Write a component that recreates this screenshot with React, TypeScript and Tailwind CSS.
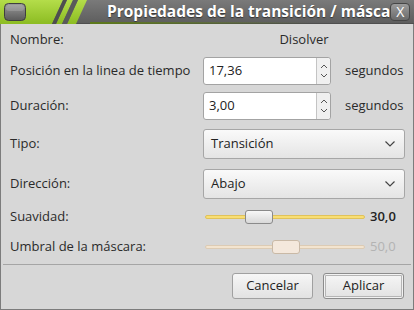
import React from "react";

const font = { fontFamily: '"Open Sans", "Noto Sans", sans-serif' };

function TitleBar() {
  return (
    <div className="relative flex h-[24px] items-center bg-gradient-to-b from-[#7a7a7a] to-[#5e5e5e] border-b border-[#4f4f4f]">
      {/* decoración verde del tema */}
      <svg width="100" height="24" viewBox="0 0 100 24" className="shrink-0">
        <defs>
          <linearGradient id="g" x1="0" y1="0" x2="0" y2="1">
            <stop offset="0" stopColor="#b4dd4a" />
            <stop offset="1" stopColor="#8cbc22" />
          </linearGradient>
          <linearGradient id="b" x1="0" y1="0" x2="0" y2="1">
            <stop offset="0" stopColor="#9a9a9a" />
            <stop offset="1" stopColor="#5a5a5a" />
          </linearGradient>
        </defs>
        <polygon points="0,0 63,0 52,24 0,24" fill="url(#g)" />
        <polygon points="67,0 73,0 62,24 56,24" fill="url(#g)" />
        <polygon points="78,0 87,0 76,24 67,24" fill="url(#g)" />
        <polygon points="63,0 67,0 56,24 52,24" fill="#4e4e4e" />
        <polygon points="73,0 78,0 67,24 62,24" fill="#5a5a5a" />
        <rect x="4.5" y="3.5" width="21" height="17" rx="4" fill="url(#b)" stroke="#3f3f3f" />
        <rect x="6" y="5" width="18" height="6" rx="3" fill="#ffffff" opacity="0.15" />
      </svg>
      <div
        className="ml-[7px] whitespace-nowrap text-[15.5px] font-bold leading-none text-white [text-shadow:0_1px_1px_#333]"
        style={font}
      >
        Propiedades de la transición / másca
      </div>
      <div className="ml-auto mr-[4px] flex h-[18px] w-[21px] items-center justify-center rounded-[4px] border border-[#464646] bg-gradient-to-b from-[#9c9c9c] to-[#6a6a6a] text-[14px] leading-none text-white" style={font}>
        X
      </div>
      <div className="absolute bottom-[-1px] left-[90px] h-[2px] w-[220px] bg-gradient-to-r from-[#5d7a1a] to-transparent" />
    </div>
  );
}

function SpinBox({ value }: { value: string }) {
  return (
    <div className="flex h-[28px] w-[128px] rounded-[3px] border border-[#a3a3a3] bg-white">
      <div className="flex flex-1 items-center pl-[5px] text-[13px] text-[#222]">{value}</div>
      <div className="flex w-[14px] flex-col items-center justify-center border-l border-[#c4c4c4] bg-[#f0f0f0] rounded-r-[3px]">
        <svg width="8" height="20" viewBox="0 0 8 20">
          <path d="M1 7 L4 4 L7 7" fill="none" stroke="#555" strokeWidth="1" />
          <path d="M1 13 L4 16 L7 13" fill="none" stroke="#555" strokeWidth="1" />
        </svg>
      </div>
    </div>
  );
}

function Combo({ value }: { value: string }) {
  return (
    <div className="flex h-[30px] w-[202px] items-center justify-between rounded-[3px] border border-[#a6a6a6] bg-gradient-to-b from-[#fafafa] to-[#e4e4e4] pl-[7px] pr-[9px] text-[13px] text-[#222]">
      <span>{value}</span>
      <svg width="10" height="6" viewBox="0 0 10 6">
        <path d="M0.5 0.5 L5 5 L9.5 0.5" fill="none" stroke="#444" strokeWidth="1.2" />
      </svg>
    </div>
  );
}

function Slider({ pos, disabled, value }: { pos: number; disabled?: boolean; value: string }) {
  return (
    <div className="flex items-center">
      <div className="relative ml-[2px] flex h-[20px] w-[160px] items-center">
        <div
          className={
            disabled
              ? "h-[4px] w-full rounded-full border border-[#dccbb4] bg-[#f3e4cf]"
              : "h-[4px] w-full rounded-full border border-[#e0c25a] bg-[#f8de74]"
          }
        />
        <div
          className={
            disabled
              ? "absolute top-[3px] h-[14px] w-[28px] rounded-[3px] border border-[#c9b9a6] bg-[#f4e8dc]"
              : "absolute top-[3px] h-[14px] w-[28px] rounded-[3px] border border-[#8a8a8a] bg-gradient-to-b from-[#f8f8f8] to-[#d8d8d8]"
          }
          style={{ left: pos }}
        />
      </div>
      <span
        className={
          disabled
            ? "ml-[5px] text-[13px] text-[#b3b3b3]"
            : "ml-[5px] text-[13px] font-semibold text-[#222]"
        }
      >
        {value}
      </span>
    </div>
  );
}

function Row({ label, className, children }: { label: string; className: string; children: React.ReactNode }) {
  return (
    <div className={`flex items-center ${className}`}>
      <div className="w-[202px] shrink-0 pl-[9px]">{label}</div>
      {children}
    </div>
  );
}

export default function App() {
  return (
    <div className="h-[310px] w-[414px] overflow-hidden bg-[#d7d7d7]" style={font}>
      <TitleBar />
      <div className="flex h-[286px] flex-col border-b border-l border-r border-[#7c7c7c] text-[13px] text-[#2a2a2a]">
        <Row label="Nombre:" className="mt-[5px] h-[22px]">
          <div className="w-[202px] text-center">Disolver</div>
        </Row>
        <Row label="Posición en la linea de tiempo" className="mt-[6px] h-[28px]">
          <SpinBox value="17,36" />
          <span className="ml-[14px]">segundos</span>
        </Row>
        <Row label="Duración:" className="mt-[7px] h-[28px]">
          <SpinBox value="3,00" />
          <span className="ml-[14px]">segundos</span>
        </Row>
        <Row label="Tipo:" className="mt-[9px] h-[30px]">
          <Combo value="Transición" />
        </Row>
        <Row label="Dirección:" className="mt-[10px] h-[30px]">
          <Combo value="Abajo" />
        </Row>
        <Row label="Suavidad:" className="mt-[8px] h-[20px]">
          <Slider pos={40} value="30,0" />
        </Row>
        <Row label="Umbral de la máscara:" className="mt-[10px] h-[20px]">
          <Slider pos={67} disabled value="50,0" />
        </Row>
        <div className="mx-[2px] mt-[7px] h-px bg-[#a5a5a5]" />
        <div className="mt-[8px] flex justify-end gap-[10px] pr-[9px]">
          <button className="h-[26px] w-[81px] rounded-[3px] border border-[#a0a0a0] bg-gradient-to-b from-[#f6f6f6] to-[#e2e2e2] text-[13px] text-[#222]">
            Cancelar
          </button>
          <button className="h-[26px] w-[81px] rounded-[3px] border border-[#8c8c8c] bg-gradient-to-b from-[#f6f6f6] to-[#e2e2e2] text-[13px] text-[#222] shadow-[inset_0_0_0_1px_#f2f2f2,inset_0_0_0_2px_#b5b5b5]">
            Aplicar
          </button>
        </div>
      </div>
    </div>
  );
}
